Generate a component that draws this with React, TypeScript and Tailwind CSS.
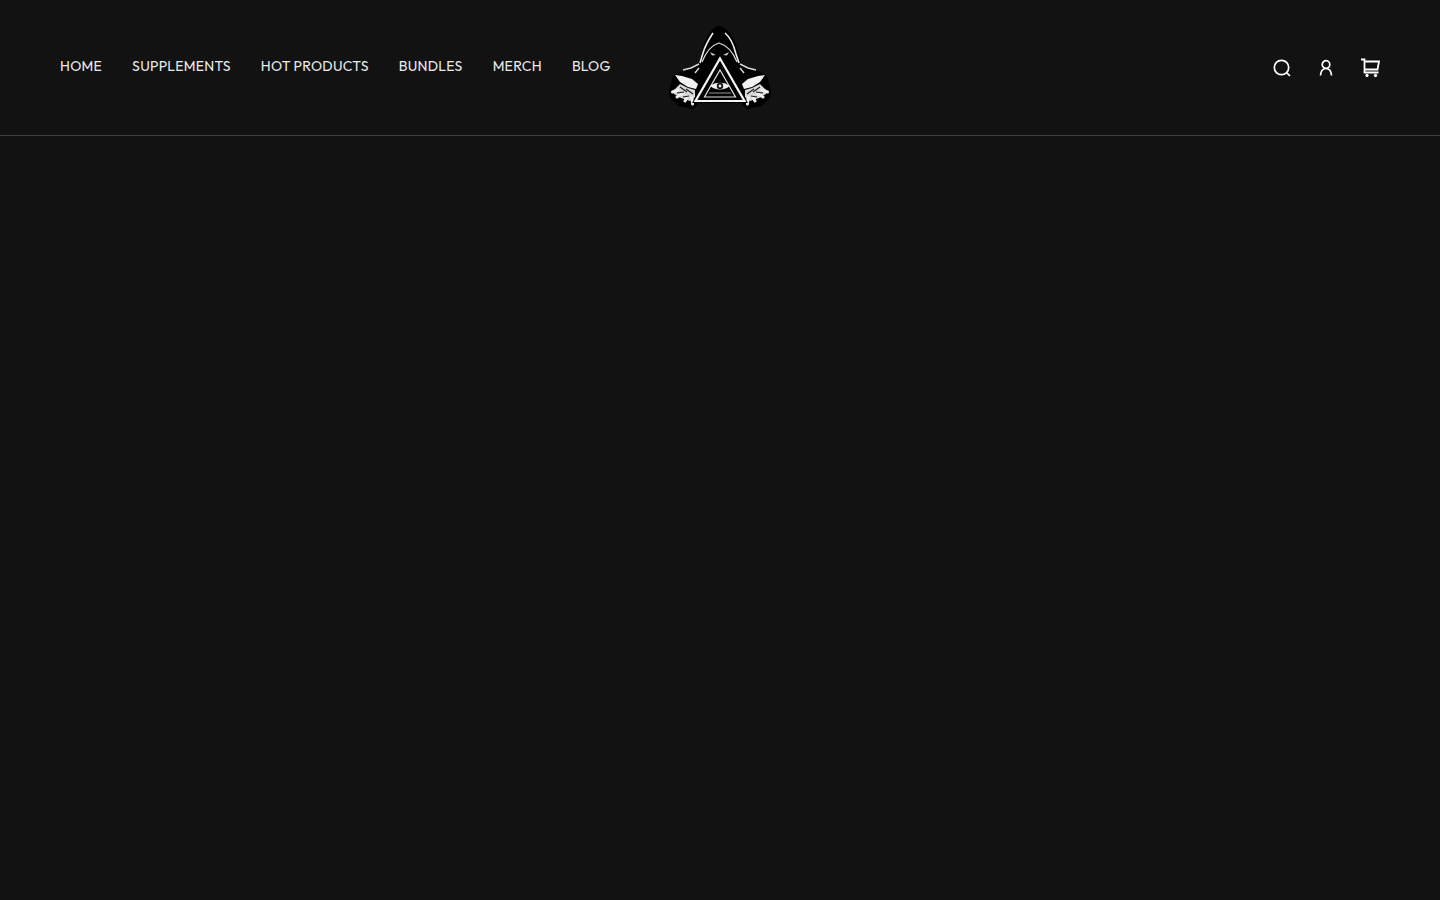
import React from "react";

const navLinks = ["HOME", "SUPPLEMENTS", "HOT PRODUCTS", "BUNDLES", "MERCH", "BLOG"];

// left hand of the logo, the right one is mirrored
const Hand = () => (
  <g>
    <path d="M1 65 L5 50 L14 45 L30 40 L38 56 L32 76 L25 83 L10 80 L2 72 Z" fill="#000" />
    <path d="M7 49 L14 50 L24 53 L30 58 L28 63 L20 61 L12 56 Z" fill="#f2f2f2" />
    <path d="M12 58 L20 62 L27 64 L27 71 L22 75 L13 72 L6 68 L6 64 Z" fill="#d8d8d8" />
    <g stroke="#f0f0f0" strokeWidth="3" strokeLinecap="round">
      <path d="M10 64 L4.5 66" />
      <path d="M14 68 L9 71" />
      <path d="M19 71 L17 75" />
      <path d="M24 72 L24.5 78" />
    </g>
    <path d="M12 61 L19 66 M9 67 L16 66 M18 63 L25 68 M15 71 L21 70" stroke="#1a1a1a" strokeWidth="1.1" />
  </g>
);

const Logo = () => (
  <svg width="104" height="84" viewBox="0 0 104 84" fill="none">
    {/* hood and shoulders */}
    <path d="M51 0 C59 1 66 10 69 22 L73 37 L84 44 L92 52 L82 77 L22 77 L12 52 L21 44 L31 37 L35 22 C38 10 44 1 51 0 Z" fill="#000" />
    <path d="M45 7 C41 13 37 20 35 27 L32 37" stroke="#efefef" strokeWidth="1.6" />
    <path d="M57 7 C63 12 66 20 68 28 L71 37" stroke="#efefef" strokeWidth="1.6" />
    <path d="M34 36 C38 26 44 19 51 17 C58 19 65 26 69 36" stroke="#e2e2e2" strokeWidth="1.2" />
    <path d="M42 26 L48 29 L44 29.5 Z M61 26 L55 29 L59 29.5 Z" fill="#ccc" />
    <Hand />
    <g transform="translate(104 0) scale(-1 1)">
      <Hand />
    </g>
    {/* shoulders */}
    <path d="M31 38 L23 42 L15 44 M31 42 L27 47 M72 38 L80 42 L88 44 M72 42 L76 47" stroke="#d8d8d8" strokeWidth="1.4" />
    {/* triangle with eye */}
    <path d="M52 29 L80 77 L24 77 Z" fill="#000" />
    <path d="M52 32.5 L76.5 75 L27.5 75 Z" stroke="#f5f5f5" strokeWidth="2.2" />
    <path d="M52 44 L67.5 71 L36.5 71 Z" stroke="#e0e0e0" strokeWidth="1.2" />
    <path d="M42.5 60 C46 55.5 58 55.5 61.5 60 C58 64.5 46 64.5 42.5 60 Z" fill="#f0f0f0" />
    <circle cx="52" cy="60" r="3.2" fill="#111" />
    <circle cx="52" cy="60" r="1.4" fill="#eee" />
    <path d="M41 67 L63 67" stroke="#bbb" strokeWidth="0.8" />
  </svg>
);

export default function App() {
  return (
    <div className="min-h-screen bg-[#121212] font-['Outfit','Inter',sans-serif]">
      <header className="grid h-[136px] grid-cols-[1fr_auto_1fr] items-center border-b border-[#404040] px-[60px]">
        <nav className="flex items-center gap-[30px] pb-1">
          {navLinks.map((link) => (
            <a key={link} className="text-sm leading-5 tracking-[0.25px] text-[#eaeaea]">
              {link}
            </a>
          ))}
        </nav>
        <div className="flex justify-center">
          <Logo />
        </div>
        <div className="flex items-center justify-end gap-6">
          <svg width="20" height="20" viewBox="0 0 20 20" fill="none" stroke="#fff" strokeWidth="1.7">
            <circle cx="9.5" cy="9.5" r="7.2" />
            <path d="M14.8 14.8 L18 18" />
          </svg>
          <svg width="20" height="20" viewBox="0 0 20 20" fill="none" stroke="#fff" strokeWidth="1.7">
            <circle cx="10" cy="6.5" r="3.8" />
            <path d="M4.5 17.5 C4.8 13 7 10.5 10 10.5 C13 10.5 15.2 13 15.5 17.5" />
          </svg>
          <svg width="20" height="20" viewBox="0 0 20 20" fill="none" stroke="#fff" strokeWidth="1.8">
            <path d="M1 1.5 H4.5 V14.5 H18.5" />
            <path d="M4.5 3.5 H19 L17.5 11.5 H4.5" />
            <circle cx="7" cy="17.5" r="1.2" fill="#fff" strokeWidth="1" />
            <circle cx="15.5" cy="17.5" r="1.2" fill="#fff" strokeWidth="1" />
          </svg>
        </div>
      </header>
    </div>
  );
}
